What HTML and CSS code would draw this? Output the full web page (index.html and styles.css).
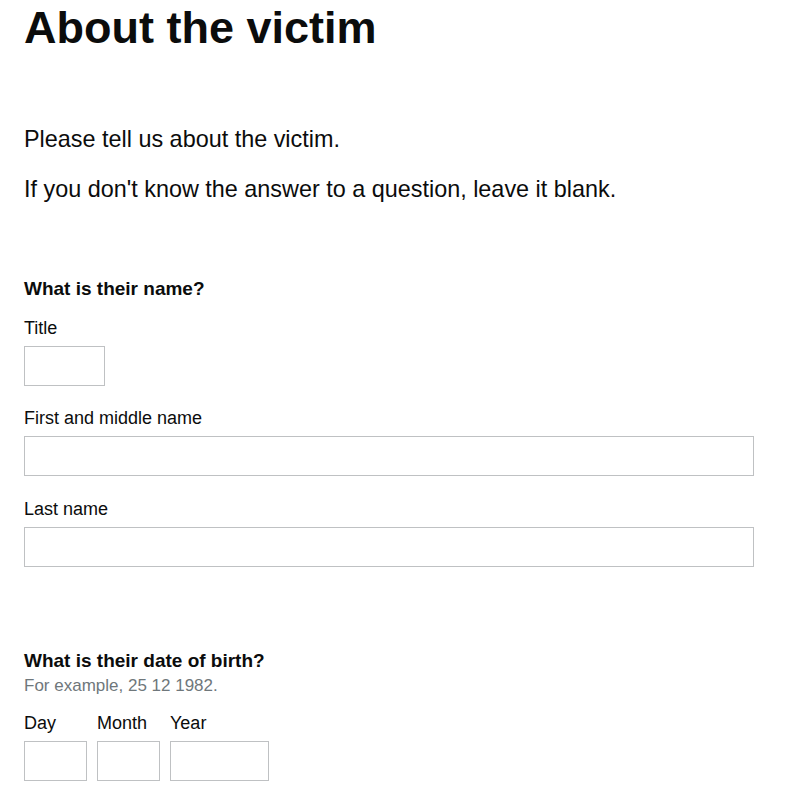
FILE: index.html
```html
<!DOCTYPE html>
<html lang="en">
<head>
<meta charset="utf-8">
<title>About the victim</title>
<link rel="stylesheet" href="styles.css">
</head>
<body>
<main class="page">
  <h1 class="title">About the victim</h1>
  <p class="lead first">Please tell us about the victim.</p>
  <p class="lead">If you don't know the answer to a question, leave it blank.</p>

  <fieldset class="group name-group">
    <legend class="question">What is their name?</legend>
    <div class="field">
      <label class="label" for="title">Title</label>
      <input class="input input-short" id="title" type="text">
    </div>
    <div class="field">
      <label class="label" for="first">First and middle name</label>
      <input class="input input-full" id="first" type="text">
    </div>
    <div class="field">
      <label class="label" for="last">Last name</label>
      <input class="input input-full" id="last" type="text">
    </div>
  </fieldset>

  <fieldset class="group dob-group">
    <legend class="question">What is their date of birth?</legend>
    <div class="hint">For example, 25 12 1982.</div>
    <div class="date">
      <div class="date-item">
        <label class="label" for="day">Day</label>
        <input class="input input-day" id="day" type="text">
      </div>
      <div class="date-item">
        <label class="label" for="month">Month</label>
        <input class="input input-day" id="month" type="text">
      </div>
      <div class="date-item">
        <label class="label" for="year">Year</label>
        <input class="input input-year" id="year" type="text">
      </div>
    </div>
  </fieldset>
</main>
</body>
</html>
```
FILE: styles.css
```css
html, body {
  margin: 0;
  padding: 0;
  background: #fff;
}
body {
  font-family: "Liberation Sans", Arial, sans-serif;
  color: #0b0c0c;
}
.page {
  padding: 0 24px;
}
.title {
  margin: 0;
  font-size: 45px;
  font-weight: 700;
  line-height: 55px;
}
.lead {
  margin: 25px 0 0;
  font-size: 23.4px;
  line-height: 25px;
}
.lead.first {
  margin-top: 72px;
}
.group {
  border: 0;
  margin: 0;
  padding: 0;
  min-width: 0;
}
.name-group {
  margin-top: 74px;
}
.dob-group {
  margin-top: 81px;
}
.question {
  padding: 0;
  font-size: 19px;
  font-weight: 700;
  line-height: 25px;
}
.field {
  margin-top: 17px;
}
.field + .field {
  margin-top: 22px;
}
.field + .field + .field {
  margin-top: 23px;
}
.label {
  display: block;
  font-size: 18px;
  line-height: 20px;
  margin-bottom: 8px;
}
.input {
  display: block;
  box-sizing: border-box;
  height: 40px;
  border: 1px solid #bfc1c3;
  margin: 0;
  padding: 4px;
  font: inherit;
  background: #fff;
}
.input-short { width: 81px; }
.input-full { width: 730px; }
.input-day { width: 63px; }
.input-year { width: 99px; }
.hint {
  font-size: 17px;
  line-height: 20px;
  color: #6f777b;
  margin-top: 3px;
}
.date {
  display: flex;
  gap: 10px;
  margin-top: 17px;
}
.date-item {
  display: flex;
  flex-direction: column;
}
```
